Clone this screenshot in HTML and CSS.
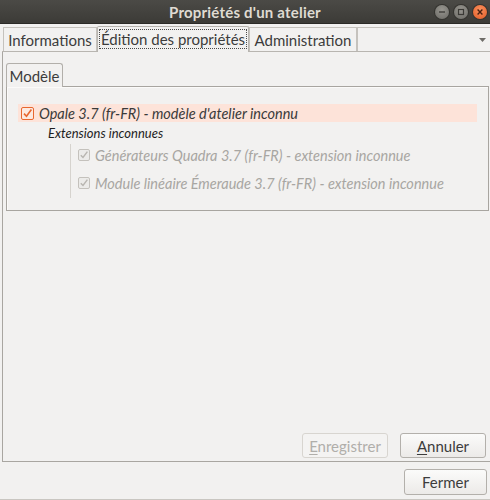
FILE: index.html
```html
<!DOCTYPE html>
<html lang="fr">
<head>
<meta charset="utf-8">
<title>Propriétés d'un atelier</title>
<link rel="stylesheet" href="styles.css">
</head>
<body>
<div class="window">
  <div class="titlebar">
    <div></div>
    <div class="title">Propriétés d'un atelier</div>
    <div class="wbtns">
      <span class="wbtn"><svg width="14" height="14" viewBox="0 0 14 14"><line x1="4" y1="7" x2="10" y2="7" stroke="#3a3935" stroke-width="1.3"/></svg></span>
      <span class="wbtn"><svg width="14" height="14" viewBox="0 0 14 14"><rect x="4.5" y="4.5" width="5" height="5" fill="none" stroke="#3a3935" stroke-width="1.2"/></svg></span>
      <span class="wbtn close"><svg width="14" height="14" viewBox="0 0 14 14"><path d="M4.6 4.6 L9.4 9.4 M9.4 4.6 L4.6 9.4" stroke="#4a2010" stroke-width="1.4"/></svg></span>
    </div>
  </div>

  <div class="notebook">
    <div class="tabs">
      <div class="tab t1">Informations</div>
      <div class="tab t2 active"><span class="focus">Édition des propriétés</span></div>
      <div class="tab t3">Administration</div>
      <div class="tabfill"><svg width="7" height="4" viewBox="0 0 7 4"><path d="M0 0 L7 0 L3.5 4 Z" fill="#6e6c68"/></svg></div>
    </div>
    <div class="page">
      <div class="inner-tabs">
        <div class="itab">Modèle</div>
      </div>
      <div class="ipanel">
        <div class="row main">
          <svg class="cb" width="13" height="13" viewBox="0 0 13 13"><rect x="0.5" y="0.5" width="12" height="12" rx="1.5" fill="#fde9e0" stroke="#e8672f"/><path d="M3 6.6 L5.5 9.2 L10.4 2.6" fill="none" stroke="#e8672f" stroke-width="1.6"/></svg>
          <span class="label">Opale 3.7 (fr-FR) - modèle d'atelier inconnu</span>
        </div>
        <div class="group">Extensions inconnues</div>
        <div class="children">
          <div class="row child">
            <svg class="cb2" width="12" height="12" viewBox="0 0 12 12"><rect x="0.5" y="0.5" width="11" height="11" rx="1.5" fill="#ecebe9" stroke="#c4c1bc"/><path d="M2.8 6.2 L5 8.5 L9.4 2.6" fill="none" stroke="#b8b5b0" stroke-width="1.4"/></svg>
            <span class="label">Générateurs Quadra 3.7 (fr-FR) - extension inconnue</span>
          </div>
          <div class="row child">
            <svg class="cb2" width="12" height="12" viewBox="0 0 12 12"><rect x="0.5" y="0.5" width="11" height="11" rx="1.5" fill="#ecebe9" stroke="#c4c1bc"/><path d="M2.8 6.2 L5 8.5 L9.4 2.6" fill="none" stroke="#b8b5b0" stroke-width="1.4"/></svg>
            <span class="label">Module linéaire Émeraude 3.7 (fr-FR) - extension inconnue</span>
          </div>
        </div>
      </div>
      <div class="spacer"></div>
      <div class="actions">
        <button class="btn disabled"><u>E</u>nregistrer</button>
        <button class="btn"><u>A</u>nnuler</button>
      </div>
    </div>
  </div>

  <div class="bottom">
    <button class="btn close-btn">Fermer</button>
  </div>
</div>
</body>
</html>
```

FILE: styles.css
```css
html, body {
  margin: 0;
  padding: 0;
}
body {
  width: 490px;
  height: 500px;
  overflow: hidden;
  background: #f2f1f0;
  font-family: Lato, "Open Sans", "DejaVu Sans", sans-serif;
  font-size: 15px;
  color: #3c3c3c;
}
.window {
  display: flex;
  flex-direction: column;
  height: 500px;
  box-sizing: border-box;
  border-bottom: 1px solid #c9c6c1;
}
.titlebar {
  height: 24px;
  flex: none;
  display: grid;
  grid-template-columns: 1fr auto 1fr;
  align-items: center;
  background: linear-gradient(#4b4a46, #3c3b37);
  border-bottom: 1px solid #2b2a27;
  box-sizing: border-box;
}
.title {
  color: #dfdbd2;
  font-weight: bold;
  font-size: 15px;
  letter-spacing: 0.2px;
}
.wbtns {
  display: flex;
  justify-content: flex-end;
  gap: 5px;
  padding-right: 3px;
}
.wbtn {
  width: 14px;
  height: 14px;
  border-radius: 50%;
  background: radial-gradient(circle at 50% 35%, #97958f, #6b6a65);
  box-shadow: 0 0 0 1px #34332f;
  display: flex;
}
.wbtn.close {
  background: radial-gradient(circle at 50% 35%, #f8915f, #e35a24);
}
.notebook {
  flex: 1;
  display: flex;
  flex-direction: column;
  padding-left: 2px;
  min-height: 0;
}
.tabs {
  height: 28px;
  flex: none;
  display: flex;
  align-items: flex-end;
  box-sizing: border-box;
  padding-left: 1px;
  border-bottom: 1px solid #b8b5b0;
  background: #f2f1f0;
}
.tab {
  height: 24px;
  box-sizing: border-box;
  display: flex;
  align-items: center;
  justify-content: center;
  border: 1px solid #c5c2bd;
  border-bottom: none;
  color: #3c3c3c;
}
.t1 { width: 94px; }
.t2 { width: 152px; }
.t3 { width: 108px; }
.tab.active {
  height: 26px;
  margin-bottom: -1px;
  background: #f2f1f0;
  border-color: #b8b5b0;
  border-radius: 2px 2px 0 0;
  padding-bottom: 2px;
}
.focus {
  outline: 1px dotted #4a4a4a;
  outline-offset: 0;
  line-height: 18px;
  padding: 0 1px;
}
.tabfill {
  flex: 1;
  height: 24px;
  box-sizing: border-box;
  border-top: 1px solid #c5c2bd;
  border-left: 1px solid #c5c2bd;
  display: flex;
  align-items: center;
  justify-content: flex-end;
  padding-right: 4px;
}
.page {
  flex: 1;
  display: flex;
  flex-direction: column;
  border-left: 1px solid #a9a6a1;
  border-bottom: 1px solid #a9a6a1;
  padding: 11px 1px 3px 3px;
  min-height: 0;
}
.inner-tabs {
  display: flex;
  flex: none;
}
.itab {
  height: 24px;
  box-sizing: border-box;
  width: 57px;
  display: flex;
  align-items: center;
  justify-content: center;
  border: 1px solid #b2afaa;
  border-bottom: none;
  border-radius: 3px 3px 0 0;
  margin-bottom: -1px;
  background: #f2f1f0;
  position: relative;
  z-index: 1;
}
.ipanel {
  flex: none;
  height: 125px;
  box-sizing: border-box;
  border: 1px solid #a8a5a0;
  box-shadow: inset 1px 1px 0 #fbfaf9;
  padding: 17px 11px 0 11px;
}
.row {
  display: flex;
  align-items: center;
  font-style: italic;
  font-size: 14.5px;
}
.row.main {
  height: 18px;
  background: #fde3d9;
  padding-left: 3px;
  gap: 5px;
  color: #3a3a3a;
}
.group {
  font-style: italic;
  font-size: 13px;
  color: #1e1e1e;
  padding-left: 30px;
  height: 20px;
  line-height: 22px;
}
.children {
  margin-left: 52px;
  margin-top: 2px;
  border-left: 1px solid #d6d3ce;
  padding-left: 7px;
  padding-top: 2px;
  height: 54px;
  box-sizing: border-box;
}
.row.child {
  height: 18px;
  gap: 5px;
  color: #a8a6a2;
  margin-bottom: 10px;
}
.cb, .cb2 {
  flex: none;
}
.spacer {
  flex: 1;
}
.actions {
  display: flex;
  justify-content: flex-end;
  gap: 12px;
  padding-right: 3px;
}
.btn {
  font-family: inherit;
  font-size: 15px;
  color: #3c3c3c;
  height: 25px;
  width: 86px;
  box-sizing: border-box;
  border: 1px solid #b3b0ab;
  border-radius: 3px;
  background: linear-gradient(#fbfbfa, #eceae8);
  padding: 0;
  margin: 0;
}
.btn u {
  text-decoration-thickness: 1px;
  text-underline-offset: 2px;
}
.btn.disabled {
  color: #b0aeaa;
  border-color: #d8d5d0;
  background: #f4f3f2;
}
.bottom {
  flex: none;
  height: 37px;
  display: flex;
  align-items: flex-start;
  justify-content: flex-end;
  padding: 7px 3px 0 0;
  box-sizing: border-box;
}
.close-btn {
  width: 83px;
  height: 26px;
}
```
